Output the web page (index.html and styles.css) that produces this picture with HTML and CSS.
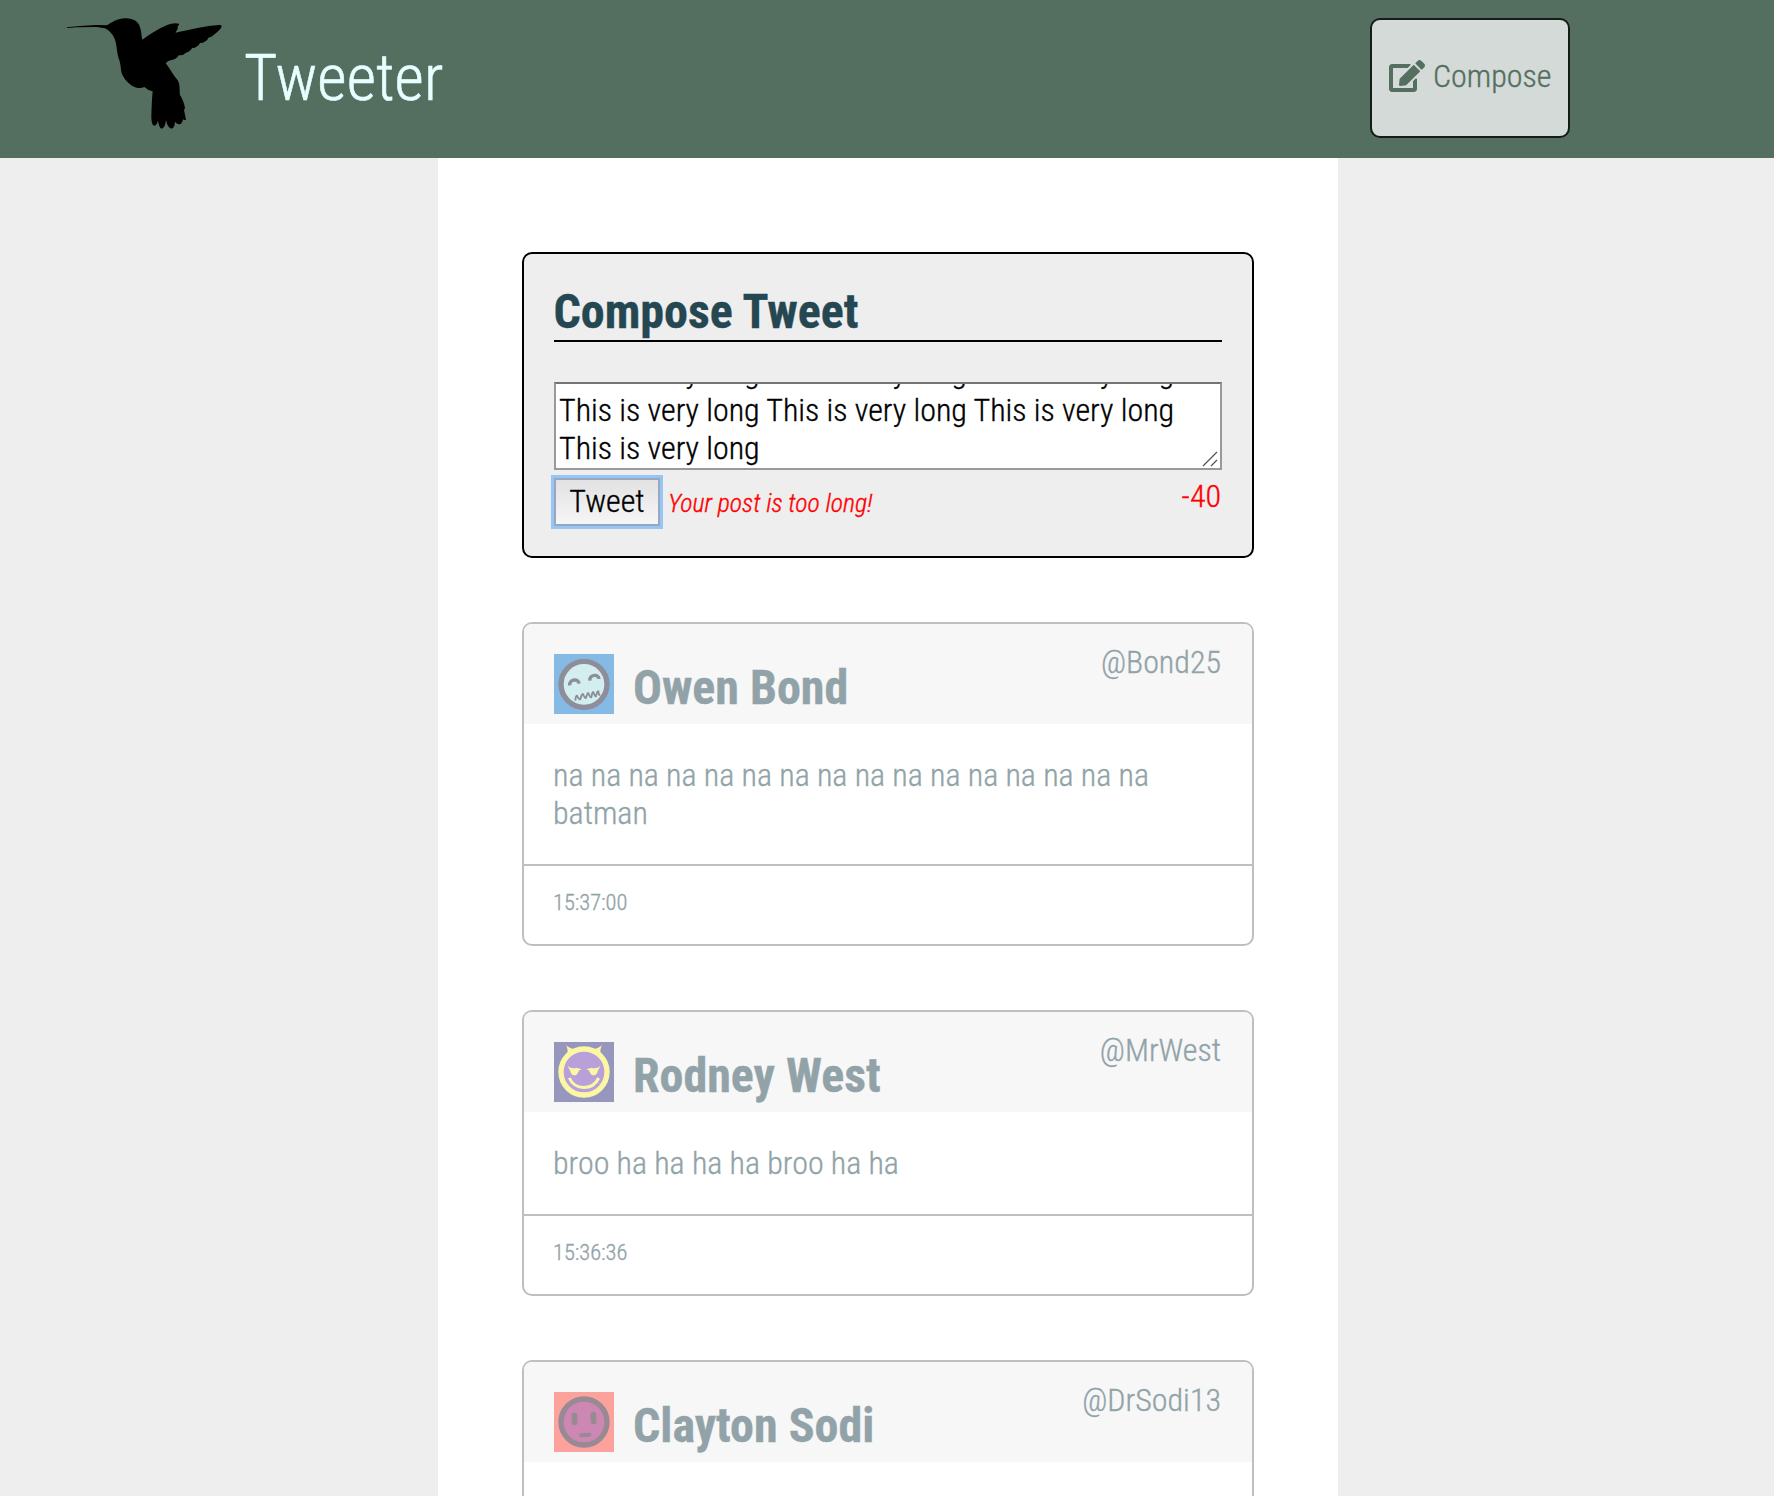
FILE: index.html
```html
<!DOCTYPE html>
<html lang="en">
<head>
<meta charset="utf-8">
<title>Tweeter</title>
<link rel="stylesheet" href="styles.css">
</head>
<body>
<header class="nav">
  <svg class="bird" viewBox="48 48 471 342" aria-hidden="true"><path d="M50 82L90 78L140 75L171 76C188 66 202 54 229 55C251 56 264 65 269 79C275 94 274 108 277 119C301 101 336 78 364 71Q377 68 387 71Q389 74 383 79Q385 88 379 93Q377 97 377 98C415 90 470 77 506 75Q515 74 515 79C513 88 500 98 491 105Q485 112 475 113Q473 122 463 126Q455 130 450 128Q448 137 438 141Q432 145 427 143Q420 155 408 158Q400 167 386 166Q379 179 364 180Q352 183 347 190C360 206 371 228 382 239C391 251 388 270 390 285C397 296 404 312 405 325L402 330L408 359Q403 362 399 358Q396 374 387 373Q379 371 375 365Q374 384 364 386Q353 384 348 360Q346 383 335 386Q327 383 324 362Q320 377 312 377Q304 374 304 350Q305 305 308 274Q292 270 283 261Q273 266 260 263C238 257 218 233 214 216C212 204 212 191 207 178C200 159 201 132 193 114Q184 95 165 85L140 81L80 82L52 84Z"/></svg>
  <h1 class="brand">Tweeter</h1>
  <button class="compose" type="button">
    <svg class="edit" viewBox="0 0 576 512" aria-hidden="true"><path d="M402.6 83.2l90.2 90.2c3.8 3.8 3.8 10 0 13.8L274.4 405.6l-92.8 10.3c-12.4 1.4-22.9-9.1-21.5-21.5l10.3-92.8L388.8 83.2c3.8-3.8 10-3.8 13.8 0zm162-22.9l-48.8-48.8c-15.2-15.2-39.9-15.2-55.2 0l-35.4 35.4c-3.8 3.8-3.8 10 0 13.8l90.2 90.2c3.8 3.8 10 3.8 13.8 0l35.4-35.4c15.2-15.3 15.2-40 0-55.2zM384 346.2V448H64V128h229.8c3.2 0 6.2-1.3 8.5-3.5l40-40c7.6-7.6 2.2-20.5-8.5-20.5H48C21.5 64 0 85.5 0 112v352c0 26.5 21.5 48 48 48h352c26.5 0 48-21.5 48-48V306.2c0-10.7-12.9-16-20.5-8.5l-40 40c-2.2 2.3-3.5 5.3-3.5 8.5z"/></svg>
    <span>Compose</span>
  </button>
</header>
<main class="container">
  <section class="card new-tweet">
    <h2 class="title">Compose Tweet</h2>
    <div class="field">
      <p class="field-text">This is very long This is very long This is very long<br>This is very long This is very long This is very long<br>This is very long</p>
      <svg class="grip" viewBox="0 0 16 16" aria-hidden="true"><path d="M1 15L15 1M9 15L15 9"/></svg>
    </div>
    <div class="actions">
      <button class="submit" type="button">Tweet</button>
      <em class="error">Your post is too long!</em>
      <span class="counter">-40</span>
    </div>
  </section>

  <article class="card tweet">
    <header class="tweet-head">
      <svg class="avatar" viewBox="0 0 180 180" aria-hidden="true"><rect width="180" height="180" fill="#85bae5"/><circle cx="90" cy="91" r="69" fill="#d2eeee" stroke="#8e8d9a" stroke-width="16"/><path d="M47 94C46 74 74 73 75 89M107 80C108 60 134 60 135 75" fill="none" stroke="#8e8d9a" stroke-width="10"/><path d="M64 140Q65 124 69 125Q75 138 79 136Q84 118 87 120Q93 134 96 132Q100 116 103 117Q108 131 112 130Q115 113 118 114Q123 129 126 127Q130 110 133 112Q134 124 139 123" fill="none" stroke="#8e8d9a" stroke-width="5.5" stroke-linejoin="round"/></svg>
      <h2 class="name">Owen Bond</h2>
      <span class="handle">@Bond25</span>
    </header>
    <p class="body">na na na na na na na na na na na na na na na na batman</p>
    <footer class="time">15:37:00</footer>
  </article>

  <article class="card tweet">
    <header class="tweet-head">
      <svg class="avatar" viewBox="0 0 180 180" aria-hidden="true"><rect width="180" height="180" fill="#9796bd"/><path d="M37 9Q44 18 60 21L40 38Q43 24 37 9ZM143 9Q136 18 120 21L140 38Q137 24 143 9Z" fill="#fbf7a5"/><circle cx="90" cy="90" r="69" fill="#b9a0d8" stroke="#fbf7a5" stroke-width="16"/><path d="M41 72Q50 80 60 79Q75 76 83 83Q74 83 73 90Q69 101 60 100Q51 99 49 87Q45 80 41 72ZM139 72Q130 80 120 79Q105 76 97 83Q106 83 107 90Q111 101 120 100Q129 99 131 87Q135 80 139 72Z" fill="#fbf7a5"/><path d="M46 108C63 146 116 146 134 108" fill="none" stroke="#fbf7a5" stroke-width="9"/></svg>
      <h2 class="name">Rodney West</h2>
      <span class="handle">@MrWest</span>
    </header>
    <p class="body">broo ha ha ha ha broo ha ha</p>
    <footer class="time">15:36:36</footer>
  </article>

  <article class="card tweet">
    <header class="tweet-head">
      <svg class="avatar" viewBox="0 0 180 180" aria-hidden="true"><rect width="180" height="180" fill="#fba29d"/><circle cx="90" cy="90" r="69" fill="#cc88b3" stroke="#988993" stroke-width="16"/><path d="M61 70L62 91M118 68L119 88" fill="none" stroke="#988993" stroke-width="17" stroke-linecap="round"/><path d="M81 130L106 128" fill="none" stroke="#988993" stroke-width="12" stroke-linecap="round"/></svg>
      <h2 class="name">Clayton Sodi</h2>
      <span class="handle">@DrSodi13</span>
    </header>
    <p class="body"></p>
  </article>
</main>
</body>
</html>
```
FILE: styles.css
```css
* { box-sizing: border-box; }

body {
  margin: 0;
  height: 1496px;
  overflow: hidden;
  background: #eee;
  color: #244751;
  font-family: "Roboto Condensed", Roboto, sans-serif;
  font-stretch: 75%;
  font-weight: 300;
  font-size: 32px;
  line-height: 38px;
  -webkit-text-stroke: 0.35px;
}

h1, h2, p { margin: 0; }

button {
  font: inherit;
  font-stretch: inherit;
}

.nav {
  display: flex;
  align-items: flex-start;
  height: 158px;
  padding: 16px 204px 0 66px;
  background: #546f5f;
}

.bird { width: 157px; height: 114px; }

.brand {
  margin: 25px 0 0 21px;
  color: #e6ffff;
  font-size: 64px;
  font-weight: 300;
  line-height: 76px;
  -webkit-text-stroke: 0.6px;
}

.compose {
  display: flex;
  align-items: center;
  gap: 8px;
  width: 200px;
  height: 120px;
  margin: 2px 0 0 auto;
  padding: 0 0 4px 17px;
  border: 2px solid #151b18;
  border-radius: 10px;
  background: #d4dad8;
  color: #546f5f;
}

.edit { width: 36px; height: 32px; fill: #546f5f; }

.container {
  width: 900px;
  height: 1338px;
  margin-left: 438px;
  padding: 94px 84px 0;
  background: #fff;
  overflow: hidden;
}

.card {
  margin-bottom: 64px;
  border: 2px solid #000;
  border-radius: 10px;
  overflow: hidden;
}

.new-tweet {
  height: 306px;
  padding: 30px 30px 0;
  background: #eee;
}

.title {
  height: 58px;
  border-bottom: 2px solid #000;
  font-size: 48px;
  font-weight: 700;
  line-height: 56px;
  text-indent: -0.5px;
}

.field {
  position: relative;
  display: flex;
  flex-direction: column;
  justify-content: flex-end;
  height: 88px;
  margin-top: 40px;
  padding: 0 3px 1px;
  border: 2px solid #999;
  border-top-color: #757575;
  background: #fff;
  color: #000;
  overflow: hidden;
}

.field-text { white-space: nowrap; }

.grip {
  position: absolute;
  right: 2px;
  bottom: 1px;
  width: 16px;
  height: 16px;
  fill: none;
  stroke: #555;
  stroke-width: 1.3;
}

.actions { display: flex; align-items: flex-start; margin-top: 8px; }

.submit {
  width: 106px;
  height: 48px;
  padding: 0 0 3px;
  border: 2px solid #96a9bf;
  background: linear-gradient(#e2e2e2, #f6f6f6);
  box-shadow: 0 0 0 3px #97c5f5;
  color: #000;
}

.error {
  margin: 6px 0 0 8px;
  color: #f00;
  font-size: 25.7px;
}

.counter { margin: -1px 1px 0 auto; color: #f00; }

.tweet { border-color: #bfbfbf; color: #91a3a8; }

.tweet-head {
  display: flex;
  align-items: flex-start;
  height: 100px;
  padding: 0 31px 0 30px;
  background: #f7f7f7;
}

.avatar { width: 60px; height: 60px; margin-top: 30px; }

.name {
  margin: 36px 0 0 19px;
  font-size: 48px;
  font-weight: 700;
  line-height: 56px;
}

.handle { margin: 19px 0 0 auto; }

.body { padding: 32px 30px 32px 29px; }

.time {
  height: 80px;
  padding: 22px 30px 0 29px;
  border-top: 2px solid #bfbfbf;
  font-size: 22.4px;
  line-height: 28px;
}
```
